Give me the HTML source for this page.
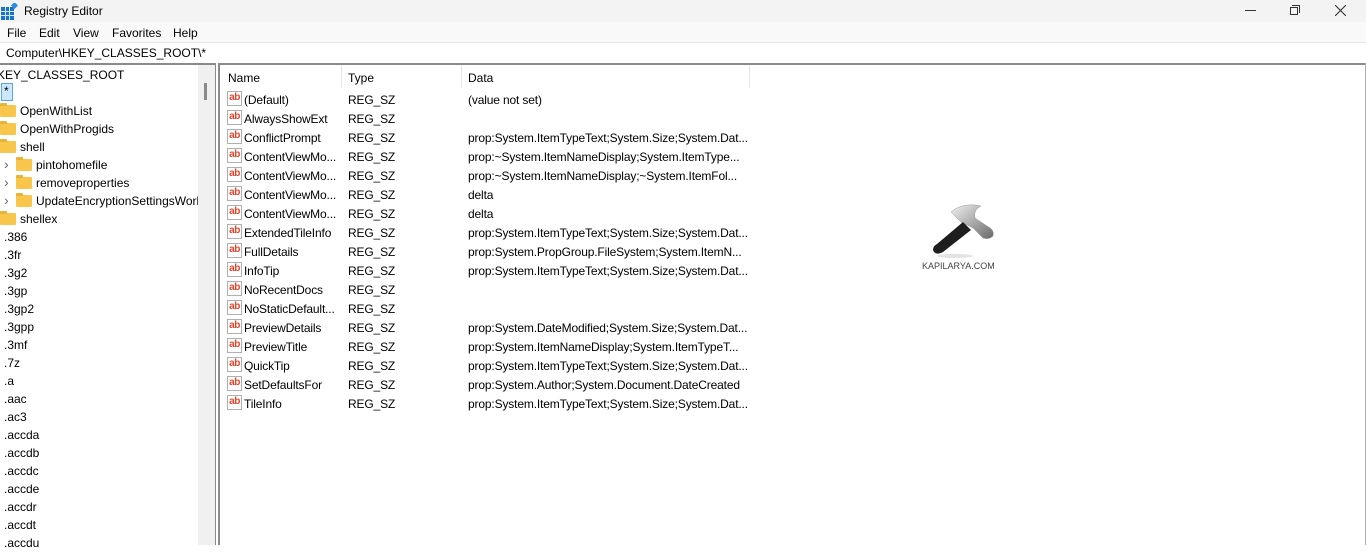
<!DOCTYPE html>
<html><head><meta charset="utf-8"><style>
*{margin:0;padding:0;box-sizing:border-box}
body{width:1366px;height:545px;overflow:hidden;background:#fff;font-family:"Liberation Sans",sans-serif;font-size:12px;color:#000;position:relative}
.abs{position:absolute;white-space:nowrap}
#title{left:0;top:0;width:1366px;height:22px;background:#f3f3f3}
#menu{left:0;top:22px;width:1366px;height:20px;background:#f9f9f9}
#addr{left:0;top:42px;width:1366px;height:21px;background:#fff;border-top:1px solid #e5e5e5}
.t{line-height:18px;height:18px}
.fold{display:inline-block;width:16px;height:12px;background:#f8c64a;border-radius:1px;vertical-align:-2px;margin-right:4px;position:relative}
.fold:before{content:"";position:absolute;left:0;top:-2px;width:7px;height:3px;background:#e9b33a;border-radius:1px 1px 0 0}
.ic{position:absolute;width:15px;height:15px;border:1px solid #b0b0b0;background:#fff;font:bold 10px "Liberation Sans",sans-serif;color:#e0452c;line-height:12px;text-align:center;letter-spacing:-0.5px}
.r{position:absolute;height:19px;line-height:19px;letter-spacing:-0.15px}
.chev{position:absolute;color:#666;font-size:14px;line-height:18px}
</style></head><body>
<div class="abs" id="title"></div>
<svg class="abs" style="left:1px;top:3px" width="17" height="17" viewBox="0 0 17 17">
<rect x="0" y="4" width="13" height="13" fill="#1a73c6"/>
<g stroke="#cfe6fb" stroke-width="1"><line x1="4.5" y1="4" x2="4.5" y2="17"/><line x1="8.5" y1="4" x2="8.5" y2="17"/><line x1="0" y1="8.5" x2="13" y2="8.5"/><line x1="0" y1="12.5" x2="13" y2="12.5"/></g>
<rect x="11" y="0" width="5" height="5" fill="#2b8de0" transform="rotate(45 13.5 2.5)"/>
</svg>
<div class="abs" style="left:24px;top:4px;font-size:12px">Registry Editor</div>
<div class="abs" style="left:1245px;top:10px;width:11px;height:1px;background:#333"></div>
<div class="abs" style="left:1290px;top:7px;width:8px;height:8px;border:1px solid #333"></div>
<div class="abs" style="left:1292px;top:5px;width:8px;height:8px;border-top:1px solid #333;border-right:1px solid #333"></div>
<svg class="abs" style="left:1335px;top:5px" width="11" height="11"><path d="M0 0L11 11M11 0L0 11" stroke="#333" stroke-width="1.1"/></svg>
<div class="abs" id="menu"></div>
<div class="abs" style="left:7px;top:26px">File</div>
<div class="abs" style="left:39px;top:26px">Edit</div>
<div class="abs" style="left:73px;top:26px">View</div>
<div class="abs" style="left:112px;top:26px">Favorites</div>
<div class="abs" style="left:173px;top:26px">Help</div>
<div class="abs" id="addr"></div>
<div class="abs" style="left:6px;top:46px">Computer\HKEY_CLASSES_ROOT\*</div>
<div class="abs" style="left:0;top:63px;width:216px;height:2px;background:#8a8a8a"></div>
<div class="abs" style="left:219px;top:63px;width:1147px;height:2px;background:#8a8a8a"></div>
<div class="abs" style="left:1365px;top:63px;width:1px;height:482px;background:#aaa"></div>
<div class="abs" style="left:198px;top:65px;width:17px;height:480px;background:#f0f0f0"></div>
<div class="abs" style="left:204px;top:83px;width:3px;height:17px;background:#8a8a8a"></div>
<div class="abs" style="left:215px;top:63px;width:1px;height:482px;background:#8a8a8a"></div>
<div class="abs" style="left:218px;top:63px;width:2px;height:482px;background:#8a8a8a"></div>
<!-- tree -->
<div class="abs t" style="left:-3px;top:66px">KEY_CLASSES_ROOT</div>
<div class="abs" style="left:1px;top:83px;width:12px;height:18px;background:#cce8ff;border:1px solid #5aa9e6;line-height:14px;padding-left:2px">*</div>
<div class="abs t" style="left:0px;top:102px"><span class="fold"></span>OpenWithList</div>
<div class="abs t" style="left:0px;top:120px"><span class="fold"></span>OpenWithProgids</div>
<div class="abs t" style="left:0px;top:138px"><span class="fold"></span>shell</div>
<div class="chev" style="left:4px;top:155px">&#8250;</div>
<div class="abs t" style="left:16px;top:156px"><span class="fold"></span>pintohomefile</div>
<div class="chev" style="left:4px;top:173px">&#8250;</div>
<div class="abs t" style="left:16px;top:174px"><span class="fold"></span>removeproperties</div>
<div class="chev" style="left:4px;top:191px">&#8250;</div>
<div class="abs t" style="left:16px;top:192px;width:182px;overflow:hidden"><span class="fold"></span>UpdateEncryptionSettingsWork</div>
<div class="abs t" style="left:0px;top:210px"><span class="fold"></span>shellex</div>
<div id="tree"></div>
<!-- header -->
<div class="abs" style="left:228px;top:71px">Name</div>
<div class="abs" style="left:348px;top:71px">Type</div>
<div class="abs" style="left:468px;top:71px">Data</div>
<div class="abs" style="left:341px;top:66px;width:1px;height:22px;background:#e5e5e5"></div>
<div class="abs" style="left:461px;top:66px;width:1px;height:22px;background:#e5e5e5"></div>
<div class="abs" style="left:749px;top:66px;width:1px;height:22px;background:#e5e5e5"></div>
<div id="rows"></div>
<script>
var t=[".386",".3fr",".3g2",".3gp",".3gp2",".3gpp",".3mf",".7z",".a",".aac",".ac3",".accda",".accdb",".accdc",".accde",".accdr",".accdt",".accdu"],th="";
t.forEach(function(s,i){th+='<div class="abs t" style="left:4px;top:'+(228+i*18)+'px">'+s+'</div>';});
document.getElementById("tree").innerHTML=th;
var d=[["(Default)","(value not set)"],["AlwaysShowExt",""],["ConflictPrompt","prop:System.ItemTypeText;System.Size;System.Dat..."],["ContentViewMo...","prop:~System.ItemNameDisplay;System.ItemType..."],["ContentViewMo...","prop:~System.ItemNameDisplay;~System.ItemFol..."],["ContentViewMo...","delta"],["ContentViewMo...","delta"],["ExtendedTileInfo","prop:System.ItemTypeText;System.Size;System.Dat..."],["FullDetails","prop:System.PropGroup.FileSystem;System.ItemN..."],["InfoTip","prop:System.ItemTypeText;System.Size;System.Dat..."],["NoRecentDocs",""],["NoStaticDefault...",""],["PreviewDetails","prop:System.DateModified;System.Size;System.Dat..."],["PreviewTitle","prop:System.ItemNameDisplay;System.ItemTypeT..."],["QuickTip","prop:System.ItemTypeText;System.Size;System.Dat..."],["SetDefaultsFor","prop:System.Author;System.Document.DateCreated"],["TileInfo","prop:System.ItemTypeText;System.Size;System.Dat..."]];
var h="";d.forEach(function(r,i){var y=91+i*19;
h+='<div class="ic" style="left:227px;top:'+y+'px">ab</div><div class="r" style="left:244px;top:'+y+'px">'+r[0]+'</div><div class="r" style="left:348px;top:'+y+'px">REG_SZ</div><div class="r" style="left:468px;top:'+y+'px">'+r[1]+'</div>';});
document.getElementById("rows").innerHTML=h;
</script>
<!-- logo -->
<svg class="abs" style="left:925px;top:196px" width="75" height="65" viewBox="0 0 75 65">
<defs><linearGradient id="g" x1="0" y1="0" x2="1" y2="1"><stop offset="0" stop-color="#f0f0f0"/><stop offset="1" stop-color="#6a6a6a"/></linearGradient></defs>
<path d="M26 16 Q38 6 56 10 Q48 14 50 22 L62 30 Q70 34 68 40 Q64 44 58 42 L48 32 L36 26 Z" fill="url(#g)" stroke="#999" stroke-width="0.5"/>
<path d="M38 26 L46 34 L18 56 Q10 60 8 54 Q8 50 12 48 Z" fill="#1e1e1e"/>
<ellipse cx="30" cy="60" rx="18" ry="2" fill="#e3e3e3"/>
</svg>
<div class="abs" style="left:922px;top:261px;font-size:9px;color:#444">KAPILARYA.COM</div>
</body></html>
